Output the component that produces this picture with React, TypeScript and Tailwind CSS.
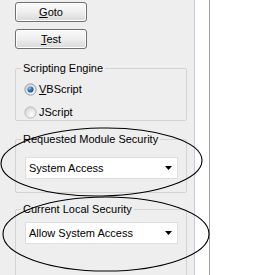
import React from "react";

const font = { fontFamily: '"Liberation Sans", Arial, sans-serif' };

function XpButton({ first, rest }: { first: string; rest: string }) {
  return (
    <div className="w-[72px] h-[20px] rounded-[3px] border border-[#707070] bg-gradient-to-b from-[#fbfbfb] via-[#eeeeee] to-[#d9d9d9] flex items-center justify-center text-[11px] text-black shadow-[inset_0_0_0_1px_#ffffff]">
      <span>
        <span className="underline underline-offset-[1px]">{first}</span>
        {rest}
      </span>
    </div>
  );
}

function Radio({ checked }: { checked: boolean }) {
  return (
    <svg width="13" height="13" viewBox="0 0 13 13">
      <defs>
        <radialGradient id={checked ? "rg1" : "rg2"} cx="0.65" cy="0.7" r="0.7">
          <stop offset="0" stopColor="#ffffff" />
          <stop offset="1" stopColor="#d8d8d8" />
        </radialGradient>
        <radialGradient id="dot" cx="0.35" cy="0.3" r="0.8">
          <stop offset="0" stopColor="#8fc0ee" />
          <stop offset="0.5" stopColor="#2f6fb5" />
          <stop offset="1" stopColor="#1b4f8a" />
        </radialGradient>
      </defs>
      <circle
        cx="6.5"
        cy="6.5"
        r="5.6"
        fill={`url(#${checked ? "rg1" : "rg2"})`}
        stroke={checked ? "#8a98a6" : "#b4b9be"}
        strokeWidth="1"
      />
      {checked && <circle cx="6.5" cy="6.5" r="3.1" fill="url(#dot)" />}
    </svg>
  );
}

function Dropdown({ text, mt }: { text: string; mt: string }) {
  return (
    <div
      className={`${mt} ml-[9px] w-[153px] h-[22px] bg-white border border-[#dedede] flex items-center justify-between pl-[3px] pr-[5px] text-[11px] text-black`}
    >
      <span>{text}</span>
      <svg width="7" height="4" viewBox="0 0 7 4">
        <polygon points="0,0 7,0 3.5,4" fill="#000" />
      </svg>
    </div>
  );
}

export default function App() {
  return (
    <div
      className="relative w-[267px] h-[275px] bg-white flex overflow-hidden"
      style={font}
    >
      <div className="w-[195px] h-full bg-[#eeeeee] border-r border-[#c5ced8] pl-[15px] pr-[7px] flex flex-col">
        <div className="mt-[2px]">
          <XpButton first="G" rest="oto" />
        </div>
        <div className="mt-[7px]">
          <XpButton first="T" rest="est" />
        </div>

        <fieldset className="mt-[13px] border border-[#d3d3d3] rounded-[2px] min-w-0 pb-[1px]">
          <legend className="ml-[5px] px-[2px] text-[11px] leading-[13px] text-black">
            Scripting Engine
          </legend>
          <div className="mt-[7px] ml-[8px] h-[14px] flex items-center gap-[2px] text-[11px] text-black">
            <Radio checked />
            <span>
              <span className="underline underline-offset-[1px]">V</span>BScript
            </span>
          </div>
          <div className="mt-[9px] ml-[8px] h-[14px] flex items-center gap-[2px] text-[11px] text-black">
            <Radio checked={false} />
            <span>JScript</span>
          </div>
        </fieldset>

        <fieldset className="mt-[12px] border border-[#d3d3d3] rounded-[2px] min-w-0 pb-[13px]">
          <legend className="ml-[5px] px-[2px] text-[11px] leading-[13px] text-black">
            Requested Module Security
          </legend>
          <Dropdown text="System Access" mt="mt-[11px]" />
        </fieldset>

        <fieldset className="mt-[10px] border border-[#d3d3d3] rounded-[2px] min-w-0 pb-[40px]">
          <legend className="ml-[5px] px-[2px] text-[11px] leading-[13px] text-black">
            Current Local Security
          </legend>
          <Dropdown text="Allow System Access" mt="mt-[6px]" />
        </fieldset>
      </div>
      <div className="w-[14px] h-full bg-white" />
      <div className="w-[1px] h-full bg-[#a0a0a0]" />
      <div className="flex-1 h-full bg-white" />

      <svg
        className="absolute left-0 top-0 pointer-events-none"
        width="267"
        height="275"
        viewBox="0 0 267 275"
      >
        <ellipse
          cx="101.5"
          cy="162"
          rx="100.5"
          ry="34"
          transform="rotate(-1 101.5 162)"
          fill="none"
          stroke="#000"
          strokeWidth="1.1"
        />
        <ellipse
          cx="106"
          cy="234"
          rx="103"
          ry="37"
          fill="none"
          stroke="#000"
          strokeWidth="1.1"
        />
      </svg>
    </div>
  );
}
